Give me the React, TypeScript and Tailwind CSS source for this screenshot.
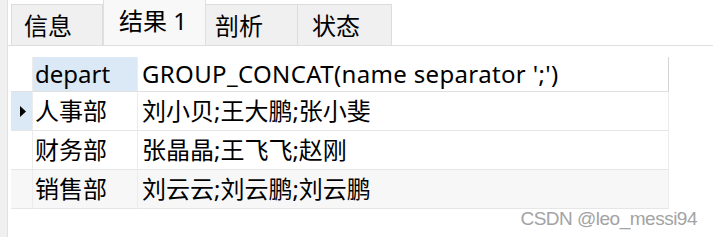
import React from "react";

const tabs = [
  { name: "信息", w: "w-[92px]", pl: "pl-[12px]", active: false },
  { name: "结果 1", w: "w-[103px]", pl: "pl-[15px]", active: true },
  { name: "剖析", w: "w-[92px]", pl: "pl-[9px]", active: false },
  { name: "状态", w: "w-[94px]", pl: "pl-[14px]", active: false },
];

const rows = [
  { depart: "人事部", names: "刘小贝;王大鹏;张小斐", current: true, alt: false },
  { depart: "财务部", names: "张晶晶;王飞飞;赵刚", current: false, alt: false },
  { depart: "销售部", names: "刘云云;刘云鹏;刘云鹏", current: false, alt: true },
];

const font = { fontFamily: '"Noto Sans", "Noto Sans CJK SC", sans-serif' };

export default function App() {
  return (
    <div className="relative flex w-[713px] h-[237px] bg-white overflow-hidden text-black" style={font}>
      {/* left gutter */}
      <div className="w-[8px] shrink-0 bg-[#f0f0f0] border-r border-[#e2e2e2]" />

      <div className="flex flex-col flex-1">
        {/* === tab strip === */}
        <div className="flex items-end h-[46px] pl-[3px] border-b border-[#dedede]">
          {tabs.map((t) => (
            <div
              key={t.name}
              className={
                t.active
                  ? `${t.w} ${t.pl} h-[46px] flex items-center pb-[4px] bg-[#f8f8f8] border border-b-0 border-[#e0e0e0] text-[24px] leading-none`
                  : `${t.w} ${t.pl} h-[41px] flex items-center pt-[1px] bg-[#f0f0f0] border border-b-0 border-l-0 first:border-l border-[#dcdcdc] text-[24px] leading-none`
              }
            >
              {t.name}
            </div>
          ))}
        </div>

        {/* === result grid === */}
        <div className="pt-[11px] pl-[3px]">
          <div className="grid grid-cols-[22px_105px_531px] text-[24px] leading-none">
            <div className="h-[35px] bg-white border-r border-[#ececec] border-b border-b-[#e0e0e0]" />
            <div className="h-[35px] flex items-center pl-[2px] bg-[#dbe9f6] border-r border-[#ececec] border-b border-b-[#e0e0e0]">
              depart
            </div>
            <div className="h-[35px] flex items-center pl-[4px] tracking-[0.35px] bg-white border-r border-r-[#d4d4d4] border-b border-b-[#e0e0e0]">
              GROUP_CONCAT(name separator &apos;;&apos;)
            </div>

            {rows.map((r) => (
              <React.Fragment key={r.depart}>
                <div
                  className={`h-[39px] flex items-center justify-center border-r border-[#ececec] border-b border-b-[#e6e6e6] ${
                    r.current ? "bg-[#dbe9f6]" : r.alt ? "bg-[#f7f7f7]" : "bg-white"
                  }`}
                >
                  {r.current && (
                    <svg width="6" height="11" viewBox="0 0 6 11" className="ml-[2px]">
                      <path d="M0 0 L6 5.5 L0 11 Z" fill="#000" />
                    </svg>
                  )}
                </div>
                <div
                  className={`h-[39px] flex items-center pl-[2px] border-r border-[#ececec] border-b border-b-[#e6e6e6] ${
                    r.alt ? "bg-[#f7f7f7]" : "bg-white"
                  }`}
                >
                  {r.depart}
                </div>
                <div
                  className={`h-[39px] flex items-center pl-[4px] border-r border-r-[#ececec] border-b border-b-[#e6e6e6] ${
                    r.alt ? "bg-[#f7f7f7]" : "bg-white"
                  }`}
                >
                  {r.names}
                </div>
              </React.Fragment>
            ))}
          </div>
        </div>
      </div>

      {/* watermark */}
      <div
        className="absolute right-[16px] top-[207px] text-[19px] leading-[24px] text-[#a3a3a3] tracking-[-0.5px]"
        style={{ fontFamily: '"Liberation Sans", Arial, sans-serif' }}
      >
        CSDN @leo_messi94
      </div>
    </div>
  );
}
